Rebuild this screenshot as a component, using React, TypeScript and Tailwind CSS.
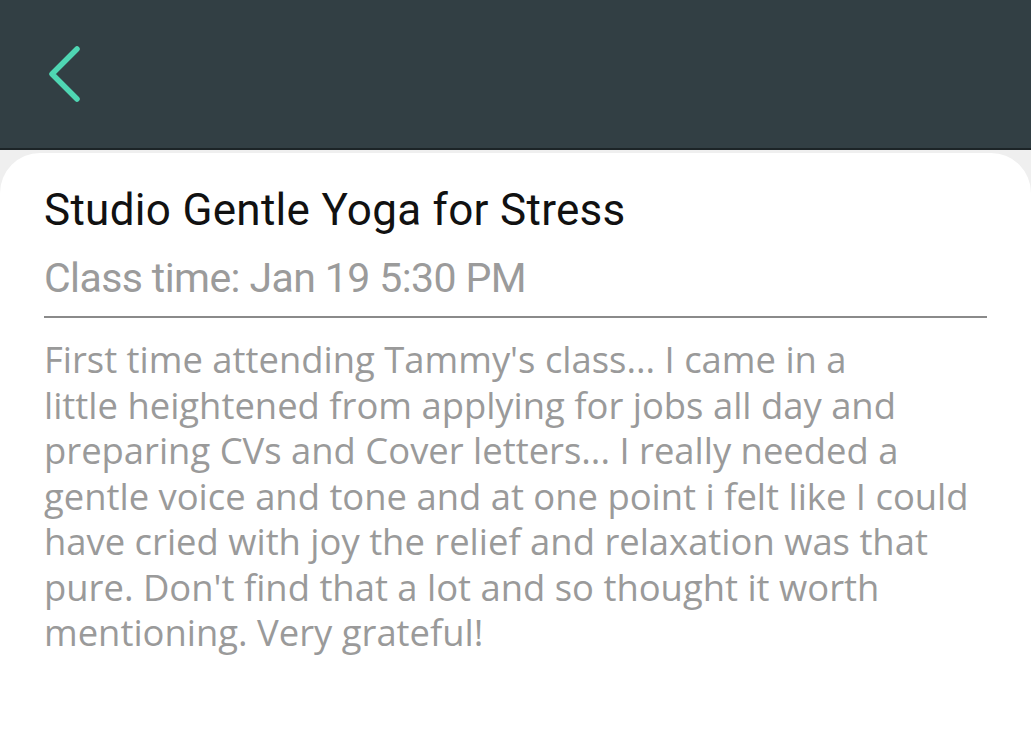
import React from 'react';

const lines = [
  "First time attending Tammy's class... I came in a",
  'little heightened from applying for jobs all day and',
  'preparing CVs and Cover letters... I really needed a',
  'gentle voice and tone and at one point i felt like I could',
  'have cried with joy the relief and relaxation was that',
  "pure. Don't find that a lot and so thought it worth",
  'mentioning. Very grateful!',
];

export default function App() {
  return (
    <div className="w-[1031px] h-[740px] overflow-hidden bg-[#efefef] flex flex-col" style={{ fontFamily: 'Roboto, "Open Sans", sans-serif' }}>
      {/* Top bar */}
      <div className="h-[150px] shrink-0 bg-[#323f44] border-b-2 border-[#1c2427] flex items-start pt-[46px] pl-[48px]">
        <svg width="36" height="56" viewBox="0 0 36 56" fill="none">
          <path d="M29 3 L4 28 L29 53" stroke="#4fd6b3" strokeWidth="5.5" strokeLinecap="round" strokeLinejoin="round" />
        </svg>
      </div>

      {/* Card */}
      <div className="flex-1 mt-[3px] bg-white rounded-t-[40px] px-[44px] pt-[33px]">
        <h1 className="text-[44px] leading-[48px] tracking-[0.3px] text-[#111] whitespace-nowrap">Studio Gentle Yoga for Stress</h1>
        <p className="mt-[20px] text-[41px] leading-[48px] tracking-[-0.6px] text-[#9b9b9b] whitespace-nowrap">Class time: Jan 19 5:30 PM</p>
        <div className="mt-[14px] h-[2px] bg-[#8a8a8a]" />
        <div className="mt-[19px] text-[36.4px] leading-[45.5px] text-[#9a9a9a]" style={{ fontFamily: '"Open Sans", Roboto, sans-serif' }}>
          {lines.map((l) => (
            <div key={l} className="whitespace-nowrap">{l}</div>
          ))}
        </div>
      </div>
    </div>
  );
}
